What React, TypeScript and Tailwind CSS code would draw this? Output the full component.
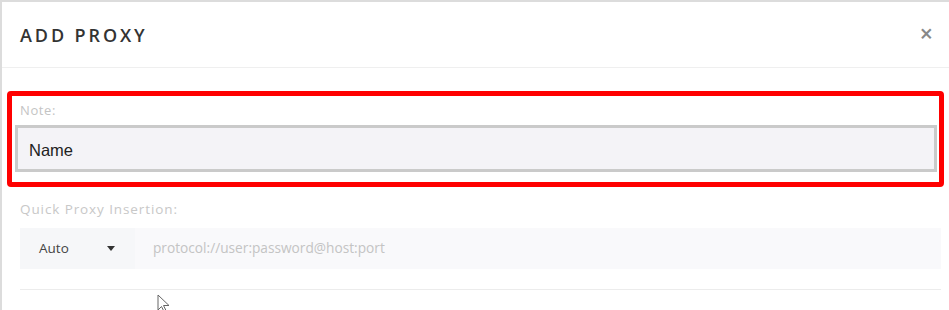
export default function App() {
    return (
        <div className="relative w-[949px] h-[310px] overflow-hidden bg-white border-l-2 border-t-2 border-[#dcdcdc]" style={{ fontFamily: '"Open Sans", Arial, sans-serif' }}>
            {/* header */}
            <div className="h-[66px] flex items-center justify-between pl-[18px] pr-[16px] border-b border-[#efefef]">
                <h2 className="text-[18px] font-semibold tracking-[2.9px] text-[#333] mt-[1px]">ADD PROXY</h2>
                <span className="text-[23px] font-semibold text-[#888] leading-none mb-[2px]">×</span>
            </div>

            {/* note field, highlighted */}
            <div className="ml-[5px] mt-[23px] w-[937px] h-[96px] border-[5px] border-[#ff0000] rounded-[4px] pl-[3px] pr-[2px] pt-[4px]">
                <label className="block text-[13px] leading-[20px] tracking-[0.6px] text-[#c4c4c4] pl-[5px]">Note:</label>
                <div className="mt-[5px] h-[47px] bg-[#f4f3f7] border-[3px] border-[#cacaca] flex items-center pl-[11px] pt-[3px]">
                    <span className="text-[16.5px] text-[#222]" style={{ fontFamily: '"Liberation Sans", Arial, sans-serif' }}>Name</span>
                </div>
            </div>

            {/* quick insertion */}
            <div className="pl-[18px] pr-[8px] mt-[13px]">
                <label className="block text-[13.5px] leading-[18px] text-[#c8c8c8] tracking-[0.9px]">Quick Proxy Insertion:</label>
                <div className="mt-[10px] h-[41px] flex bg-[#f9f9fb]">
                    <div className="w-[115px] flex items-center justify-between pl-[19px] pr-[20px] bg-[#f6f7f9]">
                        <span className="text-[13.5px] text-[#444]">Auto</span>
                        <svg width="8" height="5" viewBox="0 0 8 5"><path d="M0 0h8L4 5z" fill="#333" /></svg>
                    </div>
                    <div className="flex-1 flex items-center pl-[18px]">
                        <span className="text-[13.7px] text-[#c4c4c4]">protocol://user:password@host:port</span>
                    </div>
                </div>
                <div className="mt-[20px] h-px bg-[#ececec]" />
            </div>

            {/* mouse pointer */}
            <svg className="absolute left-[155px] top-[292px]" width="14" height="20" viewBox="0 0 14 20">
                <path d="M1 1v15l3.5-3.5 3 6 2-1-3-6H12z" fill="white" stroke="#666" strokeWidth="1" />
            </svg>
        </div>
    )
}
